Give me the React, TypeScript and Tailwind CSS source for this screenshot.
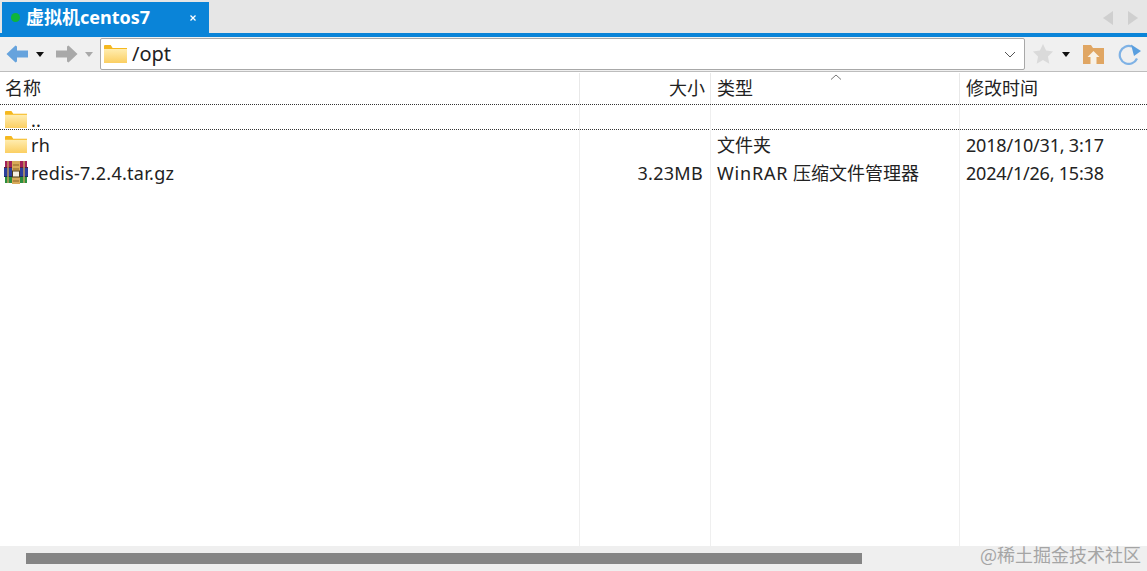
import { useId } from "react";

const cols = "grid grid-cols-[580px_131px_249px_1fr]";
const font = { fontFamily: '"Noto Sans", "Noto Sans CJK SC", sans-serif' };

function Folder({ className }: { className: string }) {
  const id = useId();
  return (
    <svg viewBox="0 0 24 18" className={className} preserveAspectRatio="none">
      <defs>
        <linearGradient id={id} x1="0" y1="0" x2="0" y2="1">
          <stop offset="0" stopColor="#ffedb0" />
          <stop offset="1" stopColor="#fbcf62" />
        </linearGradient>
      </defs>
      <path d="M0 1q0-1 1-1h6l2 3h15v15H0z" fill="#f5b81f" />
      <path d="M0 4h24v14H0z" fill={`url(#${id})`} />
    </svg>
  );
}

function RarIcon() {
  return (
    <svg viewBox="0 0 24 23" className="h-[23px] w-[24px] shrink-0">
      <rect x="1" y="0" width="22" height="7" fill="#a3215a" />
      <rect x="0" y="7" width="24" height="8" fill="#2b3f9c" />
      <rect x="1" y="15" width="22" height="7" fill="#2b8f3e" />
      <rect x="0" y="6" width="24" height="1" fill="#5a1e3e" />
      <rect x="0" y="15" width="24" height="1" fill="#16305e" />
      <rect x="3" y="0" width="2" height="22" fill="#c9a35c" opacity="0.7" />
      <rect x="19" y="0" width="2" height="22" fill="#c9a35c" opacity="0.7" />
      <rect x="8" y="0" width="8" height="23" fill="#d8aa5a" />
      <path d="M9 4h6M9 8h6M9 20h6" stroke="#8a6426" />
      <rect x="8.500" y="10" width="7" height="6" fill="#f6f0e2" stroke="#4a3a1c" />
    </svg>
  );
}

function Arrow({ color, flip }: { color: string; flip?: boolean }) {
  return (
    <svg viewBox="0 0 22 18" className={`h-[18px] w-[22px] ${flip ? "-scale-x-100" : ""}`}>
      <path d="M9.500 0.500 0.500 9l9 8.500 1.500-1V12.500h11v-7H11V1.500z" fill={color} />
    </svg>
  );
}

function Caret({ color }: { color: string }) {
  return (
    <svg viewBox="0 0 8 5" className="h-[5px] w-[8px]">
      <path d="M0 0h8L4 5z" fill={color} />
    </svg>
  );
}

function Row({ icon, name, size, type, date, extra }: { icon: React.ReactNode; name: string; size?: string; type?: React.ReactNode; date?: string; extra?: string }) {
  return (
    <div className={`${cols} text-[18px] text-[#222] ${extra ?? "h-[28px]"}`}>
      <div className="flex items-center gap-[3px] border-r border-[#efefef] pl-[4px]">
        {icon}
        <span className="pt-[2px] tracking-[0.28px]">{name}</span>
      </div>
      <div className="flex items-center justify-end border-r border-[#efefef] pt-[2px] pr-[7px] tracking-[0.3px]">{size}</div>
      <div className="flex items-center border-r border-[#efefef] pt-[2px] pl-[6px]">{type}</div>
      <div className="flex items-center pt-[2px] pl-[6px] tracking-[-0.2px]">{date}</div>
    </div>
  );
}

const folderIcon = "ml-[1px] mr-[1px] h-[17px] w-[22px] shrink-0";

export default function App() {
  return (
    <div style={font} className="relative flex h-[571px] w-[1147px] flex-col overflow-hidden bg-white">
      <div className="flex h-[33px] items-end justify-between bg-[#e6e6e6]">
        <div className="ml-[2px] flex h-[31px] w-[207px] items-center bg-[#0a84d8] pl-[9px] pr-[13px] text-white">
          <span className="h-[9px] w-[9px] rounded-full bg-[#0fb53c]" />
          <span className="ml-[6px] text-[18px] font-bold">虚拟机centos7</span>
          <svg viewBox="0 0 6 6" className="ml-auto h-[6px] w-[6px]">
            <path d="M0.500 0.500l5 5m0-5l-5 5" stroke="#fff" strokeWidth="1.300" />
          </svg>
        </div>
        <div className="mb-[8px] mr-[9px] flex gap-[15px]">
          <svg viewBox="0 0 10 14" className="h-[14px] w-[10px]"><path d="M10 0v14L0 7z" fill="#cfcfcf" /></svg>
          <svg viewBox="0 0 10 14" className="h-[14px] w-[10px]"><path d="M0 0v14l10-7z" fill="#cfcfcf" /></svg>
        </div>
      </div>
      <div className="h-[4px] bg-[#0a84d8]" />

      <div className="flex h-[35px] items-center border-b border-[#bdbdbd] bg-[#f0f0f0] pl-[6px]">
        <Arrow color="#66a3dd" />
        <span className="ml-[8px]"><Caret color="#111" /></span>
        <span className="ml-[12px]"><Arrow color="#a9a9a9" flip /></span>
        <span className="ml-[7px]"><Caret color="#a9a9a9" /></span>
        <div className="ml-[7px] flex h-[32px] w-[925px] items-center rounded-[2px] border border-[#a8a8a8] bg-white pl-[3px] pr-[8px]">
          <Folder className="h-[18px] w-[23px]" />
          <span className="ml-[5px] text-[20px] text-[#222]">/opt</span>
          <svg viewBox="0 0 12 7" className="ml-auto h-[7px] w-[12px]">
            <path d="M1 1l5 5 5-5" fill="none" stroke="#555" />
          </svg>
        </div>
        <svg viewBox="0 0 24 24" className="ml-[7px] h-[22px] w-[22px]">
          <path d="M12 1l3.400 7.300 7.600.900-5.600 5.400 1.500 7.900L12 18.600l-6.900 3.900 1.500-7.900L1 9.200l7.600-.900z" fill="#dadada" />
        </svg>
        <span className="ml-[8px]"><Caret color="#111" /></span>
        <svg viewBox="0 0 21 19" className="ml-[13px] h-[19px] w-[21px]">
          <path d="M0 0h8l2 3h11v16H0z" fill="#e0a663" />
          <path d="M10.500 6l6 6h-3v7h-6v-7h-3z" fill="#f8f2e8" />
        </svg>
        <svg viewBox="0 0 24 22" className="ml-[14px] h-[22px] w-[24px]">
          <path d="M19 15.500A9 9 0 1 1 14 3.500" fill="none" stroke="#7fb2e5" strokeWidth="2.200" />
          <path d="M13 1.500l10 6.500-7 5z" fill="#5a9fdf" />
        </svg>
      </div>

      <div className={`${cols} relative h-[32px] pt-[1px] text-[18px] text-[#222]`}>
        <div className="flex items-center border-r border-[#e8e8e8] pl-[5px]">名称</div>
        <div className="flex items-center justify-end border-r border-[#e8e8e8] pr-[5px]">大小</div>
        <div className="flex items-center border-r border-[#e8e8e8] pl-[6px]">类型</div>
        <div className="flex items-center pl-[6px]">修改时间</div>
        <svg viewBox="0 0 12 6" className="absolute left-[830px] top-[2px] h-[6px] w-[12px]">
          <path d="M1 5.500 6 1l5 4.500" fill="none" stroke="#777" />
        </svg>
      </div>

      <Row extra="h-[26px] border-y border-dotted border-[#333]" icon={<Folder className={folderIcon} />} name=".." />
      <div className="flex min-h-0 flex-1 flex-col">
        <Row icon={<Folder className={folderIcon} />} name="rh" type="文件夹" date="2018/10/31, 3:17" />
        <Row
          icon={<RarIcon />}
          name="redis-7.2.4.tar.gz"
          size="3.23MB"
          type={<span><span className="tracking-[0.8px]">WinRAR</span> 压缩文件管理器</span>}
          date="2024/1/26, 15:38"
        />
        <div className={`${cols} flex-1`}>
          <div className="border-r border-[#efefef]" />
          <div className="border-r border-[#efefef]" />
          <div className="border-r border-[#efefef]" />
          <div />
        </div>
      </div>

      <div className="flex h-[25px] items-center bg-[#efefef] pl-[26px]">
        <div className="h-[11px] w-[836px] bg-[#858585]" />
      </div>
      <span
        className="absolute bottom-[3px] right-[6px] text-[18px] text-[#a5a5a5]"
        style={{ fontFamily: '"Noto Sans CJK SC", serif' }}
      >
        @稀土掘金技术社区
      </span>
    </div>
  );
}
